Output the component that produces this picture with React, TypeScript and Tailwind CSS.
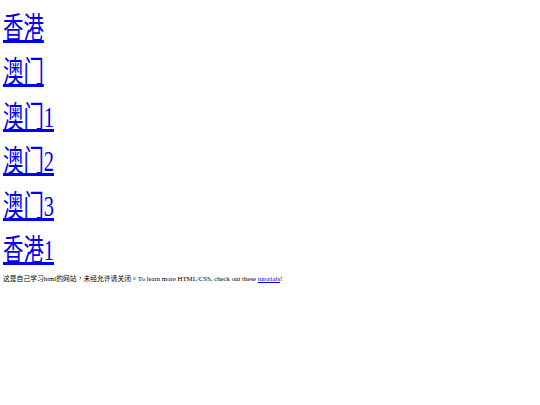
import React from "react";

const links = ["香港", "澳门", "澳门1", "澳门2", "澳门3", "香港1"];

export default function App() {
  return (
    <div
      className="min-h-[405px] w-[540px] bg-white pl-[3px] pt-[5.6px] text-black"
      style={{ fontFamily: '"Liberation Serif", "Noto Sans CJK SC", serif' }}
    >
      {links.map((t) => (
        <a
          key={t}
          href="#"
          className="block w-max origin-left scale-x-[0.68] text-[30px] leading-[44.5px] text-[#0000ee] underline"
        >
          {t}
        </a>
      ))}
      <p
        className="mt-[1px] w-max text-[6.8px] leading-[10px]"
        style={{ fontFamily: '"Liberation Serif", "Noto Sans CJK TC", serif' }}
      >
        这是自己学习html的网站，未经允许请关闭。To learn more HTML/CSS, check out these{" "}
        <a href="#" className="text-[#0000ee] underline">
          tutorials
        </a>
        !
      </p>
    </div>
  );
}
